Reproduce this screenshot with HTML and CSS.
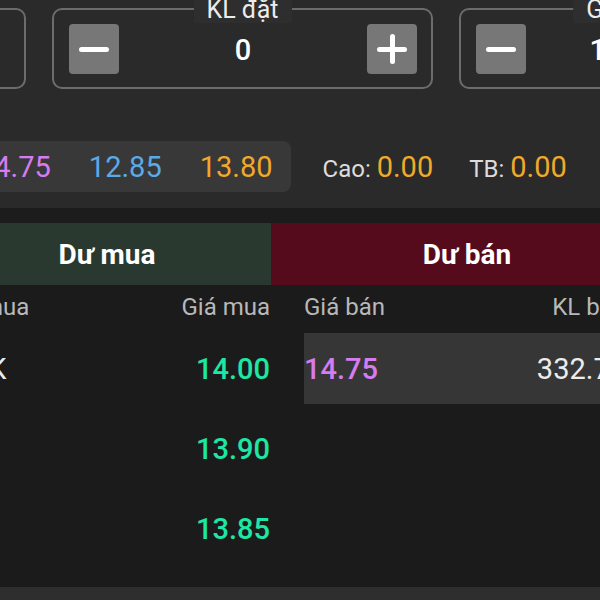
FILE: index.html
```html
<!DOCTYPE html>
<html lang="vi">
<head>
    <meta charset="UTF-8">
    <meta name="viewport" content="width=device-width, initial-scale=1.0">
    <title>Đặt lệnh</title>
    <link rel="stylesheet" href="styles.css">
</head>
<body>
    <div class="order-panel">
        <div class="steppers">
            <div class="stepper">
                <span class="stepper-label">Loại lệnh</span>
                <span class="stepper-value">LO</span>
            </div>
            <div class="stepper">
                <span class="stepper-label">KL đặt</span>
                <button class="step-btn"><span class="bar"></span></button>
                <span class="stepper-value">0</span>
                <button class="step-btn"><span class="bar"></span><span class="bar bar-v"></span></button>
            </div>
            <div class="stepper stepper-price">
                <span class="stepper-label">Giá đặt</span>
                <button class="step-btn"><span class="bar"></span></button>
                <span class="stepper-value">14.75</span>
                <button class="step-btn"><span class="bar"></span><span class="bar bar-v"></span></button>
            </div>
        </div>
        <div class="quote-row">
            <div class="price-pill">
                <span class="ceil">14.75</span>
                <span class="floor">12.85</span>
                <span class="ref">13.80</span>
            </div>
            <div class="stat">Cao: <b>0.00</b></div>
            <div class="stat">TB: <b>0.00</b></div>
        </div>
    </div>

    <div class="book">
        <div class="tabs">
            <div class="tab tab-buy">Dư mua</div>
            <div class="tab tab-sell">Dư bán</div>
        </div>
        <div class="book-body">
            <div class="side side-buy">
                <div class="row head"><span>KL mua</span><span>Giá mua</span></div>
                <div class="row"><span class="vol">1.2K</span><span class="price buy">14.00</span></div>
                <div class="row"><span class="vol"></span><span class="price buy">13.90</span></div>
                <div class="row"><span class="vol"></span><span class="price buy">13.85</span></div>
            </div>
            <div class="side side-sell">
                <div class="row head"><span>Giá bán</span><span>KL bán</span></div>
                <div class="row active"><span class="price sell">14.75</span><span class="vol">332.70</span></div>
                <div class="row"><span></span><span></span></div>
                <div class="row"><span></span><span></span></div>
            </div>
        </div>
    </div>
    <div class="footer-bar"></div>
</body>
</html>
```

FILE: styles.css
```css
body {
    margin: 0;
    width: 600px;
    height: 600px;
    overflow: hidden;
    background: #1c1c1c;
    font-family: 'Roboto', sans-serif;
    color: #fff;
}
.order-panel {
    height: 208px;
    background: #2a2a2a;
    overflow: hidden;
}
.steppers {
    display: flex;
    gap: 26px;
    margin-left: -355px;
    padding-top: 8px;
}
.stepper {
    position: relative;
    flex: 0 0 381px;
    box-sizing: border-box;
    height: 81px;
    border: 2px solid #6c6c6c;
    border-radius: 10px;
    display: flex;
    align-items: center;
    padding: 0 14px 0 15px;
}
.stepper-price {
    flex-basis: 334px;
}
.stepper-label {
    position: absolute;
    top: -14px;
    left: 50%;
    transform: translateX(-50%);
    padding: 0 13px;
    height: 27px;
    line-height: 27px;
    background: #2e2e2e;
    font-size: 25px;
    color: #ececec;
    white-space: nowrap;
}
.stepper-value {
    flex: 1;
    text-align: center;
    font-size: 29px;
    font-weight: 500;
    padding-top: 3px;
}
.step-btn {
    position: relative;
    width: 50px;
    height: 50px;
    border: none;
    border-radius: 4px;
    background: #777;
    padding: 0;
}
.bar {
    position: absolute;
    left: 10px;
    top: 23px;
    width: 30px;
    height: 5px;
    border-radius: 3px;
    background: #fff;
}
.bar-v {
    left: 23px;
    top: 10px;
    width: 5px;
    height: 30px;
}
.quote-row {
    display: flex;
    align-items: center;
    margin-top: 52px;
    height: 51px;
}
.price-pill {
    display: flex;
    align-items: center;
    gap: 38px;
    height: 51px;
    margin-left: -40px;
    padding: 0 18px;
    background: #383838;
    border-radius: 8px;
    font-size: 29px;
}
.ceil { color: #d67cf0; }
.floor { color: #5aaae6; }
.ref { color: #f0a92a; }
.stat {
    margin-left: 32px;
    font-size: 24px;
    color: #dcdcdc;
}
.stat + .stat {
    margin-left: 36px;
}
.stat b {
    font-weight: 400;
    font-size: 29px;
    color: #f0a92a;
}
.book {
    margin-top: 15px;
}
.tabs {
    display: flex;
    height: 62px;
    margin-left: -57px;
}
.tab {
    display: flex;
    align-items: center;
    justify-content: center;
    font-size: 28px;
    font-weight: 700;
}
.tab-buy {
    flex: 0 0 328px;
    background: #29392f;
}
.tab-sell {
    flex: 0 0 392px;
    background: #560b1c;
}
.book-body {
    display: flex;
    height: 302px;
    background: #1b1b1b;
    margin-left: -57px;
}
.side {
    display: flex;
    flex-direction: column;
    gap: 9px;
}
.side-buy {
    flex: 0 0 328px;
    box-sizing: border-box;
    padding: 0 1px 0 5px;
}
.side-sell {
    flex: 0 0 355px;
    box-sizing: border-box;
    padding-left: 33px;
}
.row {
    display: flex;
    justify-content: space-between;
    align-items: center;
    height: 71px;
}
.row.head {
    height: 44px;
    margin-bottom: -5px;
    font-size: 24px;
    color: #b8b8b8;
}
.row.active {
    background: #363636;
}
.price {
    font-size: 29px;
    font-weight: 500;
}
.buy { color: #1ee6a5; }
.sell { color: #d67cf0; }
.vol {
    font-size: 29px;
    color: #ececec;
}
.footer-bar {
    height: 13px;
    background: #2e2e2e;
}
```
